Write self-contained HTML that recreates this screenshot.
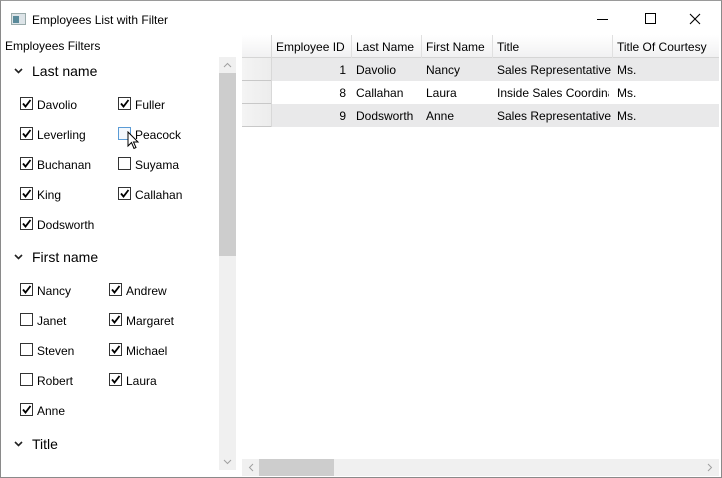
<!DOCTYPE html>
<html><head><meta charset="utf-8"><style>
*{margin:0;padding:0;box-sizing:border-box}
body{width:722px;height:478px;background:#fff;font-family:"Liberation Sans",sans-serif;font-size:12px;color:#000;position:relative;overflow:hidden}
.a{position:absolute;white-space:nowrap}
.cb{position:absolute;width:13px;height:13px;border:1px solid #333;background:#fff}
.cb svg{position:absolute;left:0;top:0}
.lbl{position:absolute;line-height:14px}
.hd{position:absolute;font-size:14px;line-height:16px}
.chev{position:absolute}
.cell{position:absolute;height:23px;line-height:25px;padding-left:4px;overflow:hidden;white-space:nowrap}
</style></head><body>
<div class="a" style="left:0;top:0;width:722px;height:478px;border:1px solid #8a8a8a;border-top-color:#9a9a9a"></div>
<div class="a" style="left:11px;top:13px;width:15px;height:12px;border:1px solid #9aa;background:#dde4e8"><div style="position:absolute;left:1px;top:2px;width:6px;height:7px;background:#5a8a9a"></div></div>
<div class="a" style="left:32px;top:13px;font-size:12px;line-height:14px">Employees List with Filter</div>
<div class="a" style="left:597px;top:19px;width:11px;height:1px;background:#000"></div>
<div class="a" style="left:645px;top:13px;width:11px;height:11px;border:1px solid #000"></div>
<svg class="a" style="left:689px;top:13px" width="12" height="12"><path d="M1 1L11 11M11 1L1 11" stroke="#000" stroke-width="1.1"/></svg>

<div class="a" style="left:5px;top:39px;line-height:14px">Employees Filters</div>

<div class="a" style="left:219px;top:57px;width:17px;height:413px;background:#f0f0f0"></div>
<div class="a" style="left:219px;top:73px;width:17px;height:183px;background:#cdcdcd"></div>
<svg class="a" style="left:223px;top:62px" width="9" height="6"><path d="M1 5L4.5 1.5L8 5" stroke="#a0a0a0" fill="none"/></svg>
<svg class="a" style="left:223px;top:459px" width="9" height="6"><path d="M1 1L4.5 4.5L8 1" stroke="#a0a0a0" fill="none"/></svg>

<svg class="chev" style="left:14px;top:68px" width="9" height="6"><path d="M1 1L4.5 4.5L8 1" stroke="#222" stroke-width="1.6" fill="none"/></svg>
<div class="hd" style="left:32px;top:63px">Last name</div>
<svg class="chev" style="left:14px;top:254px" width="9" height="6"><path d="M1 1L4.5 4.5L8 1" stroke="#222" stroke-width="1.6" fill="none"/></svg>
<div class="hd" style="left:32px;top:249px">First name</div>
<svg class="chev" style="left:14px;top:441px" width="9" height="6"><path d="M1 1L4.5 4.5L8 1" stroke="#222" stroke-width="1.6" fill="none"/></svg>
<div class="hd" style="left:32px;top:436px">Title</div>

<div id="cbs"></div>

<div class="a" style="left:242px;top:35px;width:477px;height:23px;background:linear-gradient(#fff,#f1f1f2);border-bottom:1px solid #d5d5d5"></div>
<div class="a" style="left:242px;top:58px;width:30px;height:69px;background:linear-gradient(90deg,#f4f4f4,#ececec)"></div>
<div class="a" style="left:272px;top:58px;width:447px;height:23px;background:#e9e9ea"></div>
<div class="a" style="left:272px;top:104px;width:447px;height:23px;background:#e9e9ea"></div>
<div class="a" style="left:242px;top:80px;width:30px;height:1px;background:#c8c8c8"></div>
<div class="a" style="left:242px;top:103px;width:30px;height:1px;background:#c8c8c8"></div>
<div class="a" style="left:242px;top:126px;width:30px;height:1px;background:#c8c8c8"></div>
<div class="a" style="left:271px;top:35px;width:1px;height:92px;background:#d8d8d8"></div>
<div class="a" style="left:351px;top:35px;width:1px;height:23px;background:#e0e0e0"></div>
<div class="a" style="left:421px;top:35px;width:1px;height:23px;background:#e0e0e0"></div>
<div class="a" style="left:492px;top:35px;width:1px;height:23px;background:#e0e0e0"></div>
<div class="a" style="left:612px;top:35px;width:1px;height:23px;background:#e0e0e0"></div>

<div class="cell" style="left:272px;top:35px">Employee ID</div>
<div class="cell" style="left:352px;top:35px">Last Name</div>
<div class="cell" style="left:422px;top:35px">First Name</div>
<div class="cell" style="left:493px;top:35px">Title</div>
<div class="cell" style="left:613px;top:35px">Title Of Courtesy</div>

<div class="cell" style="left:272px;top:58px;width:79px;text-align:right;padding-right:5px">1</div>
<div class="cell" style="left:352px;top:58px">Davolio</div>
<div class="cell" style="left:422px;top:58px">Nancy</div>
<div class="cell" style="left:493px;top:58px;width:119px">Sales Representative</div>
<div class="cell" style="left:613px;top:58px">Ms.</div>

<div class="cell" style="left:272px;top:81px;width:79px;text-align:right;padding-right:5px">8</div>
<div class="cell" style="left:352px;top:81px">Callahan</div>
<div class="cell" style="left:422px;top:81px">Laura</div>
<div class="cell" style="left:493px;top:81px;width:116px">Inside Sales Coordinator</div>
<div class="cell" style="left:613px;top:81px">Ms.</div>

<div class="cell" style="left:272px;top:104px;width:79px;text-align:right;padding-right:5px">9</div>
<div class="cell" style="left:352px;top:104px">Dodsworth</div>
<div class="cell" style="left:422px;top:104px">Anne</div>
<div class="cell" style="left:493px;top:104px;width:119px">Sales Representative</div>
<div class="cell" style="left:613px;top:104px">Ms.</div>

<div class="a" style="left:242px;top:459px;width:477px;height:17px;background:#f0f0f0"></div>
<div class="a" style="left:259px;top:459px;width:75px;height:17px;background:#cdcdcd"></div>
<svg class="a" style="left:248px;top:463px" width="6" height="9"><path d="M5 1L1.5 4.5L5 8" stroke="#a0a0a0" fill="none"/></svg>
<svg class="a" style="left:707px;top:463px" width="6" height="9"><path d="M1 1L4.5 4.5L1 8" stroke="#a0a0a0" fill="none"/></svg>

<svg class="a" style="left:127px;top:131px" width="13" height="20"><path d="M1 1L1 15L4.5 11.5L7 17.5L9 16.5L6.5 11L11 11Z" fill="#fff" stroke="#000" stroke-width="1"/></svg>

<script>
var items=[
[20,104,'Davolio',1],[118,104,'Fuller',1],
[20,134,'Leverling',1],[118,134,'Peacock',2],
[20,164,'Buchanan',1],[118,164,'Suyama',0],
[20,194,'King',1],[118,194,'Callahan',1],
[20,224,'Dodsworth',1],
[20,290,'Nancy',1],[109,290,'Andrew',1],
[20,320,'Janet',0],[109,320,'Margaret',1],
[20,350,'Steven',0],[109,350,'Michael',1],
[20,380,'Robert',0],[109,380,'Laura',1],
[20,410,'Anne',1]];
var h='';
items.forEach(function(i){
 var st=i[3]==2?'border-color:#5b9bd5;background:#f3f8fd;':'';
 h+='<div class="cb" style="left:'+i[0]+'px;top:'+(i[1]-7)+'px;'+st+'">'+(i[3]==1?'<svg width="11" height="11"><path d="M2 5.5L4.5 8.5L9.5 2" stroke="#000" stroke-width="1.8" fill="none"/></svg>':'')+'</div>';
 h+='<div class="lbl" style="left:'+(i[0]+17)+'px;top:'+(i[1]-6)+'px">'+i[2]+'</div>';
});
document.getElementById('cbs').innerHTML=h;
</script>
</body></html>
